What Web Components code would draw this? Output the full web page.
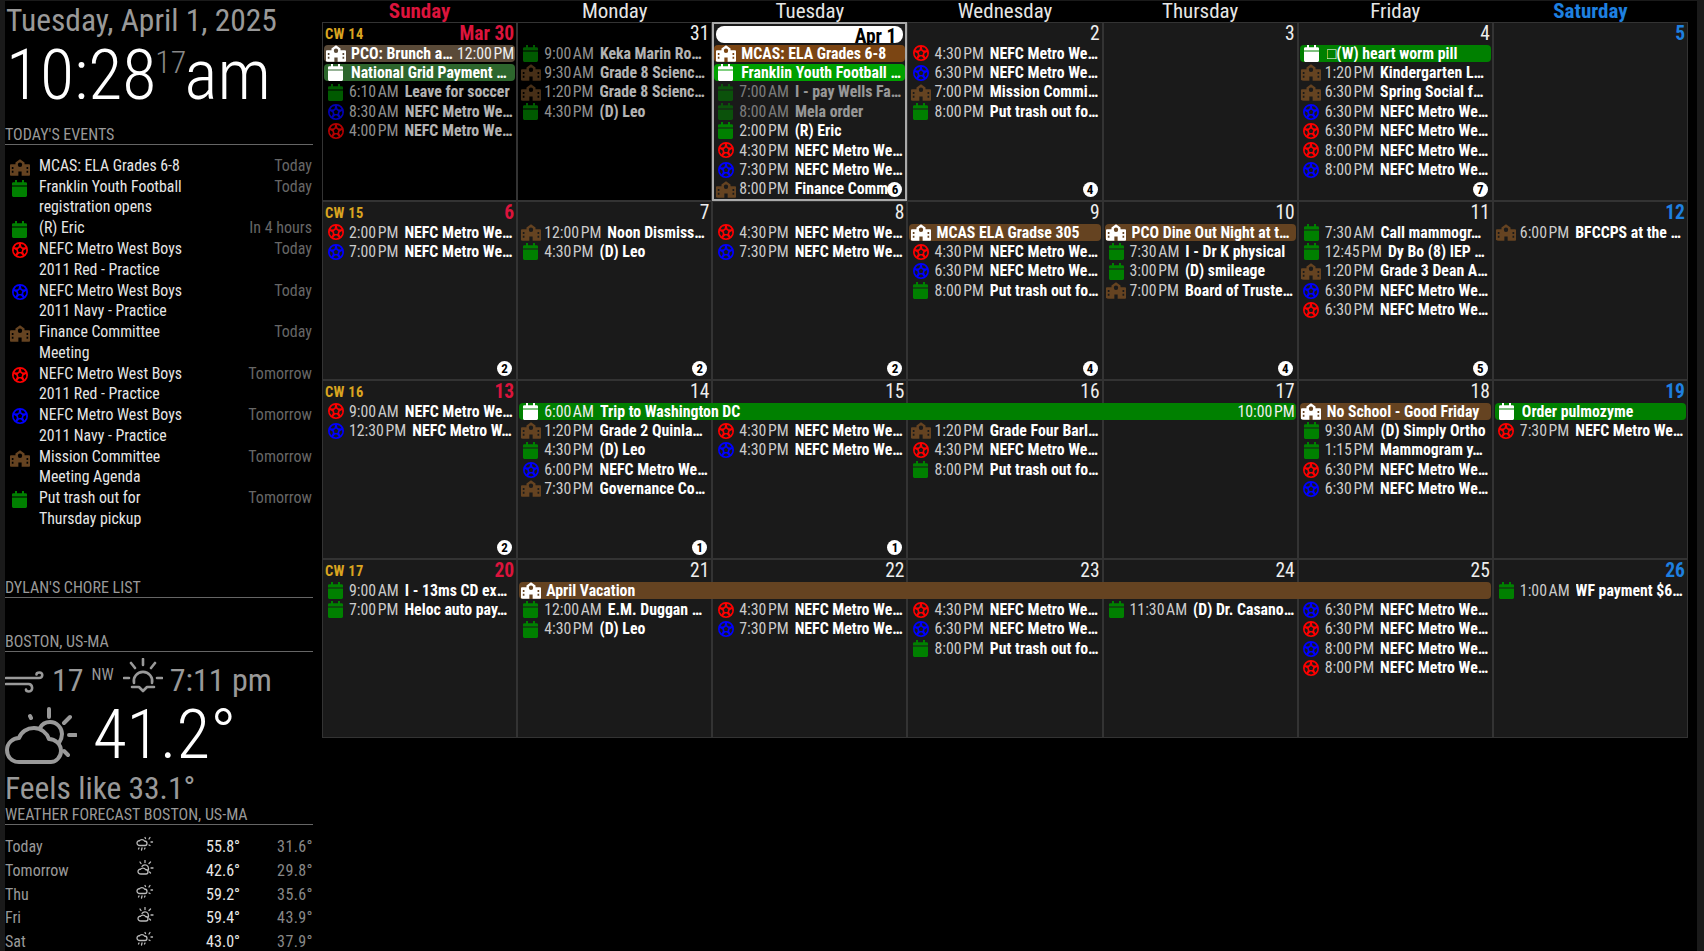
<!doctype html>
<html lang="en">
<head>
<meta charset="utf-8">
<title>MagicMirror</title>
<style>
	html, body { margin: 0; height: 100%; }
	body {
		background: #1a1a1a;
		font-family: Roboto, "Liberation Sans", sans-serif;
		font-stretch: 75%;
		color: #fff;
		overflow: hidden;
	}
</style>
</head>
<body>
<mirror-page></mirror-page>

<script>
// soccer ball: disc with a centre patch and five patches cut out
function ballPath() {
	const pt = (r, deg) => {
		const a = deg * Math.PI / 180;
		return `${(8 + r * Math.cos(a)).toFixed(2)} ${(8 + r * Math.sin(a)).toFixed(2)}`;
	};
	let d = 'M8 0a8 8 0 1 1 0 16A8 8 0 0 1 8 0zM8 1.500';
	d = 'M8 0a8 8 0 1 1 0 16A8 8 0 0 1 8 0z';
	d += 'M' + [0, 1, 2, 3, 4].map(k => pt(2.4, -90 + 72 * k)).join('L') + 'z';
	for (let k = 0; k < 5; k++) {
		const c = -54 + 72 * k;
		d += `M${pt(3.7, c - 14)}L${pt(6.2, c - 27)}L${pt(6.5, c)}L${pt(6.2, c + 27)}L${pt(3.7, c + 14)}z`;
	}
	return d;
}

const icons = {
	school: `<svg viewBox="0 0 22 18" width="20" height="17" fill="currentColor"><path fill-rule="evenodd" d="M11 0l5 3.4v2.100h5a1 1 0 0 1 1 1V17a1 1 0 0 1-1 1h-8.200v-4.500H9.200V18H1a1 1 0 0 1-1-1V6.500a1 1 0 0 1 1-1h5V3.400zM11 3.600a2.400 2.400 0 1 0 0 4.800 2.400 2.400 0 0 0 0-4.800zM2 8.500v2.200h1.800V8.500zM2 12.500v2.200h1.800v-2.200zM18.200 8.500v2.200H20V8.500zM18.200 12.500v2.200H20v-2.200z"/></svg>`,
	cal: `<svg viewBox="0 0 15 17" width="15" height="17" fill="currentColor"><path d="M3 0h2v2.200h5V0h2v2.200h1.600A1.400 1.400 0 0 1 15 3.600V5.600H0V3.600a1.400 1.400 0 0 1 1.400-1.400H3zM0 6.600h15v9a1.400 1.400 0 0 1-1.400 1.400H1.400A1.400 1.400 0 0 1 0 15.600z"/></svg>`,
	ball: `<svg viewBox="0 0 16 16" width="16" height="16" fill="currentColor"><path fill-rule="evenodd" d="${ballPath()}"/></svg>`
};

const wxIcons = {
	wind: `<svg viewBox="0 0 40 22" width="40" height="22" fill="none" stroke="#999" stroke-width="2.600" stroke-linecap="round"><path d="M1 7H34C38 7 38.500 1.500 34.500 1.500C32.500 1.500 31.500 2.500 31.500 3.500"/><path d="M1 13H23.500C28 13 28.500 20.500 24 20.500C22 20.500 21 19.500 21 18.500"/></svg>`,
	sunset: `<svg viewBox="0 0 40 36" width="40" height="36" fill="none" stroke="#999" stroke-width="2.600" stroke-linecap="round" stroke-linejoin="round"><path d="M20 1V7M8 5L12 10M32 5L28 10M1 20H6M34 20H39"/><path d="M11 25A9.200 9.200 0 1 1 29 25"/><path d="M9 29H16L20 33L24 29H31"/></svg>`,
	cloudsun: `<svg viewBox="0 0 72 57" width="72" height="57" fill="none" stroke="#999" stroke-width="4" stroke-linecap="round" stroke-linejoin="round"><path d="M14 55C6 55 2 49 2 43C2 36 8 31 14 31C16 25 22 21 29 21C36 21 42 26 44 32C50 32 56 37 56 44C56 50 51 55 46 55Z"/><path d="M35 21C37 17 41 15 45 15C52 15 57 21 57 27C57 31 56 33 54 36"/><path d="M44 2V10M25 9L26 11M65 10L59 16M64 28H71M59 44L63 48"/></svg>`,
	rainsun: `<svg viewBox="0 0 18 16" width="18" height="16" fill="none" stroke="#bbb" stroke-width="1.300" stroke-linecap="round"><path d="M4 9.500C2 9.500 1 8.500 1 7C1 5.500 2.400 4.500 3.500 4.800C4.200 3.300 7.500 3 8.500 5C10 5 11 6 11 7.300C11 8.500 10 9.500 9 9.500Z"/><path d="M9 1.500L9.500 2.500M14 1.500L13 3M16.500 6H15M14 9.500L13 9"/><path d="M3 12L2.500 13M6 12L5.500 14M9 12L8.500 13"/></svg>`,
	daycloud: `<svg viewBox="0 0 18 16" width="18" height="16" fill="none" stroke="#bbb" stroke-width="1.300" stroke-linecap="round"><path d="M5 14C3 14 2 13 2 11.500C2 10 3.400 9 4.500 9.300C5.200 7.800 8.500 7.500 9.500 9.500C11 9.500 12 10.500 12 11.800C12 13 11 14 10 14Z"/><path d="M6 6.500C7 4.500 10.500 4 12 6.500C12.800 8 12.500 9.500 12 10.500"/><path d="M9 0.500V2.500M4 2L5 3.500M14.500 2L13 3.500M17 8H15M14.500 13L13.500 12"/></svg>`
};

const KIND_COLORS = {school: '#654321', cal: '#008000', red: '#ff0000', blue: '#0000ff'};

function iconFor(kind) {
	return kind === 'school' || kind === 'cal' ? icons[kind] : icons.ball;
}

class ModuleHeader extends HTMLElement {
	constructor() {
		super();
		this.attachShadow({mode: 'open'}).innerHTML = `
			<style>
				:host { display: block; border-bottom: 1px solid #666; height: 19px; font-size: 16px; line-height: 19px; color: #999; text-transform: uppercase; }
			</style>
			<slot></slot>
		`;
	}
}
customElements.define('module-header', ModuleHeader);

class MirrorClock extends HTMLElement {
	constructor() {
		super();
		this.attachShadow({mode: 'open'}).innerHTML = `
			<style>
				:host { display: block; padding-left: 1px; height: 118px; overflow: hidden; }
				.date { font-size: 31.500px; line-height: 39px; color: #999; white-space: nowrap; }
				.time { display: flex; align-items: flex-start; font-size: 70px; line-height: 70px; font-weight: 300; color: #fff; white-space: nowrap; }
				.sec { font-size: 32px; line-height: 40px; color: #888; margin-top: 2px; margin-left: -1px; margin-right: -2px; }
			</style>
			<div class="date">Tuesday, April 1, 2025</div>
			<div class="time"><span>10:28</span><span class="sec">17</span><span>am</span></div>
		`;
	}
}
customElements.define('mirror-clock', MirrorClock);

class AgendaRow extends HTMLElement {
	constructor() {
		super();
		this.attachShadow({mode: 'open'});
	}

	connectedCallback() {
		const kind = this.getAttribute('kind');
		this.shadowRoot.innerHTML = `
			<style>
				:host { display: grid; grid-template-columns: 34px 1fr auto; font-size: 15.800px; line-height: 20.400px; margin-bottom: 0.700px; }
				.ic { color: ${KIND_COLORS[kind]}; display: flex; justify-content: center; padding-top: 3px; padding-right: 5px; }
				.ti { color: #e6e6e6; width: 160px; }
				.wh { color: #666; margin-right: 1px; font-size: 16px; }
			</style>
			<div class="ic">${iconFor(kind)}</div>
			<div class="ti"><slot></slot></div>
			<div class="wh">${this.getAttribute('when')}</div>
		`;
	}
}
customElements.define('agenda-row', AgendaRow);

class MirrorWeather extends HTMLElement {
	constructor() {
		super();
		this.attachShadow({mode: 'open'}).innerHTML = `
			<style>
				:host { display: block; color: #999; white-space: nowrap; }
				.top { display: flex; align-items: center; height: 38px; font-size: 32px; margin-top: 9px; }
				.nw { font-size: 16px; align-self: flex-start; line-height: 18px; margin: 5px 9px 0 8px; }
				.sun { margin-right: 7px; }
				.wind { margin-right: 7px; margin-top: 3px; }
				.main { display: flex; align-items: center; height: 70px; font-size: 69px; font-weight: 300; color: #fff; }
				.main svg { margin-right: 16px; margin-top: 2px; }
				.feels { font-size: 31.500px; line-height: 33px; margin-top: 3px; }
			</style>
			<div class="top"><span class="wind">${wxIcons.wind}</span><span>17</span><span class="nw">NW</span><span class="sun">${wxIcons.sunset}</span><span>7:11 pm</span></div>
			<div class="main">${wxIcons.cloudsun}<span>41.2°</span></div>
			<div class="feels">Feels like 33.1°</div>
		`;
	}
}
customElements.define('mirror-weather', MirrorWeather);

class ForecastTable extends HTMLElement {
	constructor() {
		super();
		const rows = [
			['Today', 'rainsun', '55.8°', '31.6°'],
			['Tomorrow', 'daycloud', '42.6°', '29.8°'],
			['Thu', 'rainsun', '59.2°', '35.6°'],
			['Fri', 'daycloud', '59.4°', '43.9°'],
			['Sat', 'rainsun', '43.0°', '37.9°']
		];
		this.attachShadow({mode: 'open'}).innerHTML = `
			<style>
				:host { display: grid; grid-template-columns: 131px 18px 86px 73px; grid-auto-rows: 23.800px; padding-top: 10px; font-size: 16px; line-height: 23.800px; white-space: nowrap; }
				.d { color: #999; }
				.i { display: flex; align-items: flex-start; padding-top: 1px; }
				.x { color: #e6e6e6; text-align: right; }
				.n { color: #888; text-align: right; letter-spacing: .4px; }
			</style>
			${rows.map(r => `<div class="d">${r[0]}</div><div class="i">${wxIcons[r[1]]}</div><div class="x">${r[2]}</div><div class="n">${r[3]}</div>`).join('')}
		`;
	}
}
customElements.define('forecast-table', ForecastTable);

class CalEvent extends HTMLElement {
	constructor() {
		super();
		this.attachShadow({mode: 'open'});
	}

	connectedCallback() {
		const kind = this.getAttribute('kind');
		const bar = this.hasAttribute('bar');
		const time = this.getAttribute('time');
		const end = this.getAttribute('end');
		this.shadowRoot.innerHTML = `
			<style>
				:host { display: block; min-width: 0; height: 17.500px; margin: 0 2px; font-size: 15.800px; line-height: 17.500px; white-space: nowrap; }
				.row { display: flex; align-items: center; height: 100%; border-radius: 4px; background: var(--bar, none); overflow: hidden; }
				.ic { flex: none; width: 25px; display: flex; justify-content: center; color: ${bar ? '#fff' : KIND_COLORS[kind]}; padding-right: 2px; box-sizing: border-box; }
				.tm { flex: none; color: #ccc; margin-right: 6px; word-spacing: -2px; }
				.ti { flex: 1; min-width: 0; font-weight: 700; overflow: hidden; text-overflow: ellipsis; }
				.en { flex: none; color: #ccc; padding-right: 1px; word-spacing: -2px; }
				:host([bar]:not([time])) .ic { margin-right: 2px; }
				:host([bar]) .tm, :host([bar]) .en { color: #eee; }
				:host([fade]) .row { opacity: var(--fade); }
			</style>
			<div class="row">
				<span class="ic">${iconFor(kind)}</span>
				${time ? `<span class="tm">${time}</span>` : ''}
				<span class="ti"><slot></slot></span>
				${end ? `<span class="en">${end}</span>` : ''}
			</div>
		`;
	}
}
customElements.define('cal-event', CalEvent);

class CalCell extends HTMLElement {
	constructor() {
		super();
		this.attachShadow({mode: 'open'});
	}

	connectedCallback() {
		this.shadowRoot.innerHTML = `
			<style>
				:host { display: flex; justify-content: space-between; box-sizing: border-box; min-width: 0; border: 1px solid #333; background: #1a1a1a; padding: 0 2px; }
				:host([past]) { background: #000; }
				:host([today]) { border: 2px solid #aaa; padding: 2px 2px 0; }
				.cw { color: #daa520; font-weight: 700; font-size: 14.500px; line-height: 22px; letter-spacing: .3px; padding-top: 1px; }
				.d { font-size: 19.500px; line-height: 22px; color: #eee; margin-left: auto; }
				:host([sun]) .d { color: #dc143c; font-weight: 700; }
				:host([sat]) .d { color: #1e80e0; font-weight: 700; }
				:host([today]) .d { flex: 1; height: 17px; border-radius: 8px; background: #fff; color: #000; font-weight: 700; text-align: right; padding-right: 7px; line-height: 22px; }
			</style>
			${this.hasAttribute('cw') ? `<span class="cw">CW ${this.getAttribute('cw')}</span>` : ''}
			<span class="d">${this.getAttribute('day')}</span>
		`;
	}
}
customElements.define('cal-cell', CalCell);

class CalBadge extends HTMLElement {
	constructor() {
		super();
		this.attachShadow({mode: 'open'}).innerHTML = `
			<style>
				:host { display: flex; align-items: center; justify-content: center; align-self: end; justify-self: end; width: 15px; height: 15px; margin: 0 5px 4px 0; border-radius: 50%; background: #fff; color: #000; font-size: 13px; font-weight: 700; line-height: 15px; }
			</style>
			<slot></slot>
		`;
	}
}
customElements.define('cal-badge', CalBadge);

class CalWeek extends HTMLElement {
	constructor() {
		super();
		this.attachShadow({mode: 'open'}).innerHTML = `
			<style>
				:host { display: grid; grid-template-columns: repeat(7, minmax(0, 1fr)); grid-template-rows: 23.100px repeat(8, 19.400px) auto; height: 179px; }
				::slotted(cal-cell), ::slotted(cal-badge) { grid-row: 1 / -1; }
			</style>
			<slot></slot>
		`;
	}
}
customElements.define('cal-week', CalWeek);

const NEFC = 'NEFC Metro We…';
const WEEKS = [
	{cw: 14, days: ['Mar 30', '31', 'Apr 1', '2', '3', '4', '5'], past: [0, 1], today: 2, badges: {2: 6, 3: 4, 5: 7}, events: [
		[0, 0, 'school', null, 'PCO: Brunch a…', {bar: 1, end: '12:00 PM', look: 'pastSchool'}],
		[0, 1, 'cal', null, 'National Grid Payment …', {bar: 1, look: 'pastGreen'}],
		[0, 2, 'cal', '6:10 AM', 'Leave for soccer', {fade: .7}],
		[0, 3, 'blue', '8:30 AM', NEFC, {fade: .7}],
		[0, 4, 'red', '4:00 PM', NEFC, {fade: .7}],
		[1, 0, 'cal', '9:00 AM', 'Keka Marin Ro…', {fade: .7}],
		[1, 1, 'school', '9:30 AM', 'Grade 8 Scienc…', {fade: .7}],
		[1, 2, 'school', '1:20 PM', 'Grade 8 Scienc…', {fade: .7}],
		[1, 3, 'cal', '4:30 PM', '(D) Leo', {fade: .7}],
		[2, 0, 'school', null, 'MCAS: ELA Grades 6-8', {bar: 1, look: 'todaySchool'}],
		[2, 1, 'cal', null, 'Franklin Youth Football …', {bar: 1, look: 'todayGreen'}],
		[2, 2, 'cal', '7:00 AM', 'I - pay Wells Fa…', {fade: .55}],
		[2, 3, 'cal', '8:00 AM', 'Mela order', {fade: .55}],
		[2, 4, 'cal', '2:00 PM', '(R) Eric'],
		[2, 5, 'red', '4:30 PM', NEFC],
		[2, 6, 'blue', '7:30 PM', NEFC],
		[2, 7, 'school', '8:00 PM', 'Finance Comm…'],
		[3, 0, 'red', '4:30 PM', NEFC],
		[3, 1, 'blue', '6:30 PM', NEFC],
		[3, 2, 'school', '7:00 PM', 'Mission Commi…'],
		[3, 3, 'cal', '8:00 PM', 'Put trash out fo…'],
		[5, 0, 'cal', null, '□(W) heart worm pill', {bar: 1}],
		[5, 1, 'school', '1:20 PM', 'Kindergarten L…'],
		[5, 2, 'school', '6:30 PM', 'Spring Social f…'],
		[5, 3, 'blue', '6:30 PM', NEFC],
		[5, 4, 'red', '6:30 PM', NEFC],
		[5, 5, 'red', '8:00 PM', NEFC],
		[5, 6, 'blue', '8:00 PM', NEFC]
	]},
	{cw: 15, days: ['6', '7', '8', '9', '10', '11', '12'], past: [], badges: {0: 2, 1: 2, 2: 2, 3: 4, 4: 4, 5: 5}, events: [
		[0, 0, 'red', '2:00 PM', NEFC],
		[0, 1, 'blue', '7:00 PM', NEFC],
		[1, 0, 'school', '12:00 PM', 'Noon Dismiss…'],
		[1, 1, 'cal', '4:30 PM', '(D) Leo'],
		[2, 0, 'red', '4:30 PM', NEFC],
		[2, 1, 'blue', '7:30 PM', NEFC],
		[3, 0, 'school', null, 'MCAS ELA Gradse 305', {bar: 1}],
		[3, 1, 'red', '4:30 PM', NEFC],
		[3, 2, 'blue', '6:30 PM', NEFC],
		[3, 3, 'cal', '8:00 PM', 'Put trash out fo…'],
		[4, 0, 'school', null, 'PCO Dine Out Night at t…', {bar: 1}],
		[4, 1, 'cal', '7:30 AM', 'I - Dr K physical'],
		[4, 2, 'cal', '3:00 PM', '(D) smileage'],
		[4, 3, 'school', '7:00 PM', 'Board of Truste…'],
		[5, 0, 'cal', '7:30 AM', 'Call mammogr…'],
		[5, 1, 'cal', '12:45 PM', 'Dy Bo (8) IEP …'],
		[5, 2, 'school', '1:20 PM', 'Grade 3 Dean A…'],
		[5, 3, 'blue', '6:30 PM', NEFC],
		[5, 4, 'red', '6:30 PM', NEFC],
		[6, 0, 'school', '6:00 PM', 'BFCCPS at the …']
	]},
	{cw: 16, days: ['13', '14', '15', '16', '17', '18', '19'], past: [], badges: {0: 2, 1: 1, 2: 1}, events: [
		[0, 0, 'red', '9:00 AM', NEFC],
		[0, 1, 'blue', '12:30 PM', 'NEFC Metro W…'],
		[1, 0, 'cal', '6:00 AM', 'Trip to Washington DC', {bar: 1, span: 4, end: '10:00 PM'}],
		[1, 1, 'school', '1:20 PM', 'Grade 2 Quinla…'],
		[1, 2, 'cal', '4:30 PM', '(D) Leo'],
		[1, 3, 'blue', '6:00 PM', NEFC],
		[1, 4, 'school', '7:30 PM', 'Governance Co…'],
		[2, 1, 'red', '4:30 PM', NEFC],
		[2, 2, 'blue', '4:30 PM', NEFC],
		[3, 1, 'school', '1:20 PM', 'Grade Four Barl…'],
		[3, 2, 'red', '4:30 PM', NEFC],
		[3, 3, 'cal', '8:00 PM', 'Put trash out fo…'],
		[5, 0, 'school', null, 'No School - Good Friday', {bar: 1}],
		[5, 1, 'cal', '9:30 AM', '(D) Simply Ortho'],
		[5, 2, 'cal', '1:15 PM', 'Mammogram y…'],
		[5, 3, 'red', '6:30 PM', NEFC],
		[5, 4, 'blue', '6:30 PM', NEFC],
		[6, 0, 'cal', null, 'Order pulmozyme', {bar: 1}],
		[6, 1, 'red', '7:30 PM', NEFC]
	]},
	{cw: 17, days: ['20', '21', '22', '23', '24', '25', '26'], past: [], badges: {}, events: [
		[0, 0, 'cal', '9:00 AM', 'I - 13ms CD ex…'],
		[0, 1, 'cal', '7:00 PM', 'Heloc auto pay…'],
		[1, 0, 'school', null, 'April Vacation', {bar: 1, span: 5}],
		[1, 1, 'cal', '12:00 AM', 'E.M. Duggan …'],
		[1, 2, 'cal', '4:30 PM', '(D) Leo'],
		[2, 1, 'red', '4:30 PM', NEFC],
		[2, 2, 'blue', '7:30 PM', NEFC],
		[3, 1, 'red', '4:30 PM', NEFC],
		[3, 2, 'blue', '6:30 PM', NEFC],
		[3, 3, 'cal', '8:00 PM', 'Put trash out fo…'],
		[4, 1, 'cal', '11:30 AM', '(D) Dr. Casano…'],
		[5, 1, 'blue', '6:30 PM', NEFC],
		[5, 2, 'red', '6:30 PM', NEFC],
		[5, 3, 'blue', '8:00 PM', NEFC],
		[5, 4, 'red', '8:00 PM', NEFC],
		[6, 0, 'cal', '1:00 AM', 'WF payment $6…']
	]}
];

const BAR_LOOKS = {
	school: '#654321',
	cal: '#008000',
	pastSchool: '#5a4a38',
	pastGreen: '#2d662d',
	todaySchool: '#7b4513',
	todayGreen: '#00a000'
};

function buildWeek(w) {
	const week = document.createElement('cal-week');
	w.days.forEach((day, i) => {
		const cell = document.createElement('cal-cell');
		cell.setAttribute('day', day);
		cell.style.gridColumn = i + 1;
		if (i === 0) { cell.setAttribute('cw', w.cw); cell.setAttribute('sun', ''); }
		if (i === 6) cell.setAttribute('sat', '');
		if (w.past.includes(i)) cell.setAttribute('past', '');
		if (w.today === i) cell.setAttribute('today', '');
		week.appendChild(cell);
	});
	w.events.forEach(([col, row, kind, time, title, opts = {}]) => {
		const ev = document.createElement('cal-event');
		ev.setAttribute('kind', kind);
		if (time) ev.setAttribute('time', time);
		if (opts.end) ev.setAttribute('end', opts.end);
		if (opts.bar) {
			ev.setAttribute('bar', '');
			ev.style.setProperty('--bar', BAR_LOOKS[opts.look || kind]);
		}
		if (opts.fade) {
			ev.setAttribute('fade', '');
			ev.style.setProperty('--fade', opts.fade);
		}
		ev.style.gridColumn = `${col + 1} / span ${opts.span || 1}`;
		ev.style.gridRow = row + 2;
		ev.textContent = title;
		week.appendChild(ev);
	});
	Object.keys(w.badges).forEach(col => {
		const b = document.createElement('cal-badge');
		b.style.gridColumn = Number(col) + 1;
		b.textContent = w.badges[col];
		week.appendChild(b);
	});
	return week;
}

class MirrorCalendar extends HTMLElement {
	constructor() {
		super();
		const names = ['Sunday', 'Monday', 'Tuesday', 'Wednesday', 'Thursday', 'Friday', 'Saturday'];
		this.attachShadow({mode: 'open'}).innerHTML = `
			<style>
				:host { display: block; width: 1366px; }
				.head { display: grid; grid-template-columns: repeat(7, minmax(0, 1fr)); height: 20.500px; font-size: 21px; line-height: 21px; text-align: center; color: #e6e6e6; }
				.sun { color: #dc143c; font-weight: 700; }
				.sat { color: #1e80e0; font-weight: 700; }
			</style>
			<div class="head">${names.map((n, i) => `<div class="${i === 0 ? 'sun' : i === 6 ? 'sat' : ''}">${n}</div>`).join('')}</div>
			<slot></slot>
		`;
	}

	connectedCallback() {
		if (this.children.length) return;
		WEEKS.forEach(w => this.appendChild(buildWeek(w)));
	}
}
customElements.define('mirror-calendar', MirrorCalendar);

class MirrorPage extends HTMLElement {
	constructor() {
		super();
		const agenda = [
			['school', 'Today', 'MCAS: ELA Grades 6-8'],
			['cal', 'Today', 'Franklin Youth Football registration opens'],
			['cal', 'In 4 hours', '(R) Eric'],
			['red', 'Today', 'NEFC Metro West Boys 2011 Red - Practice'],
			['blue', 'Today', 'NEFC Metro West Boys 2011 Navy - Practice'],
			['school', 'Today', 'Finance Committee Meeting'],
			['red', 'Tomorrow', 'NEFC Metro West Boys 2011 Red - Practice'],
			['blue', 'Tomorrow', 'NEFC Metro West Boys 2011 Navy - Practice'],
			['school', 'Tomorrow', 'Mission Committee Meeting Agenda'],
			['cal', 'Tomorrow', 'Put trash out for Thursday pickup']
		];
		this.attachShadow({mode: 'open'}).innerHTML = `
			<style>
				:host { display: flex; box-sizing: border-box; width: 1692px; height: 950px; margin: 1px 0 0 5px; background: #000; overflow: hidden; }
				.left { flex: none; width: 308px; margin-right: 9px; }
				.gap-a { margin-top: 6px; }
				.agenda { padding-top: 10.700px; height: 433px; box-sizing: border-box; }
				.chores { margin-bottom: 34px; }
			</style>
			<div class="left">
				<mirror-clock></mirror-clock>
				<module-header class="gap-a">Today's Events</module-header>
				<div class="agenda">
					${agenda.map(a => `<agenda-row kind="${a[0]}" when="${a[1]}">${a[2]}</agenda-row>`).join('')}
				</div>
				<module-header class="chores">Dylan's Chore List</module-header>
				<module-header>Boston, US-MA</module-header>
				<mirror-weather></mirror-weather>
				<module-header>Weather Forecast Boston, US-MA</module-header>
				<forecast-table></forecast-table>
			</div>
			<mirror-calendar></mirror-calendar>
		`;
	}
}
customElements.define('mirror-page', MirrorPage);
</script>
</body>
</html>
